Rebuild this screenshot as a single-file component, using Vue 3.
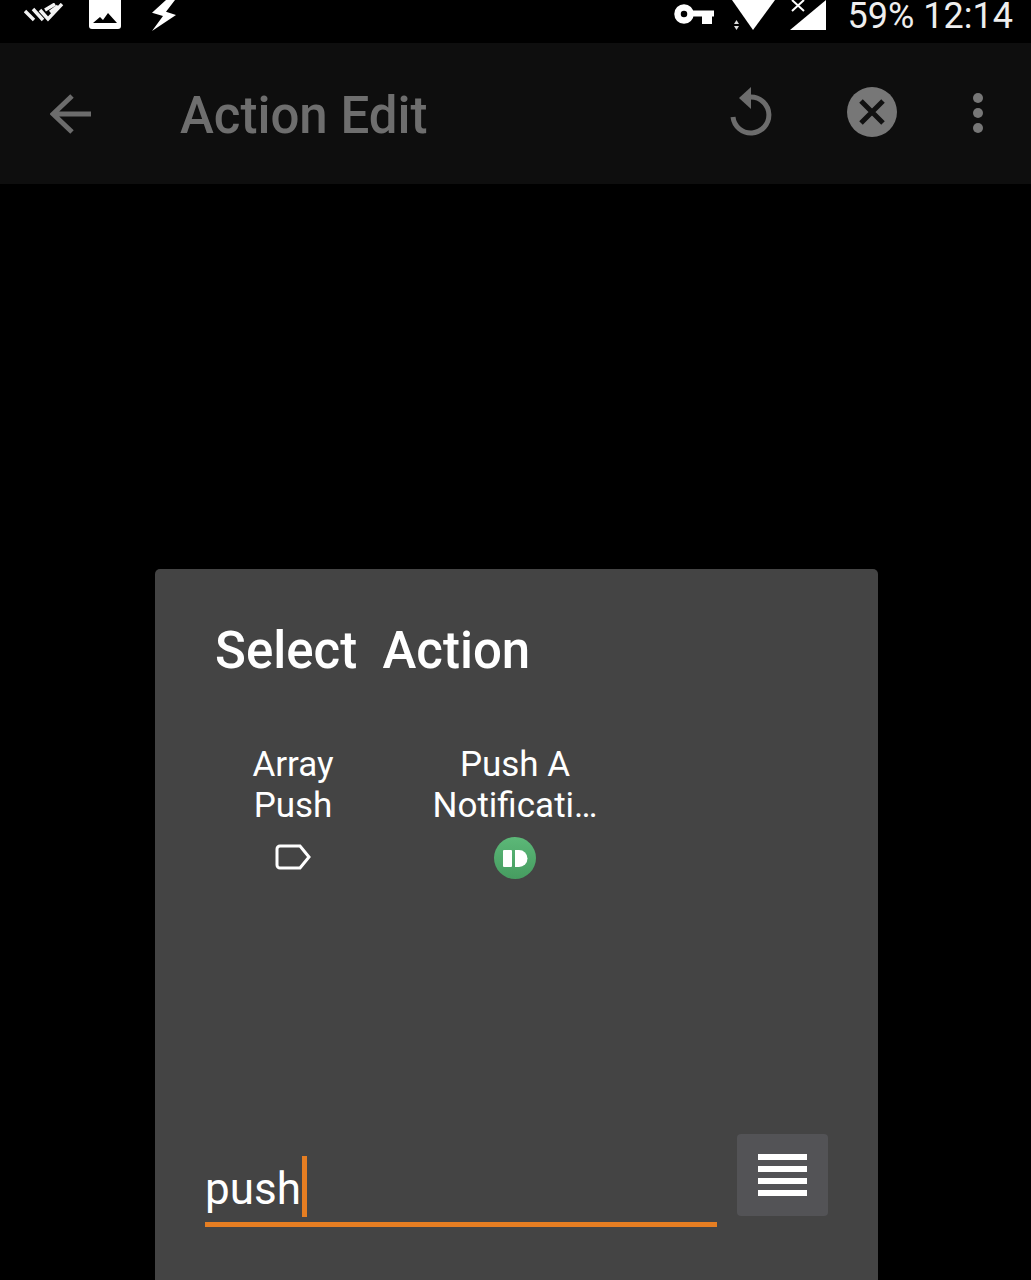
<template>
  <div class="screen">
    <div class="status">
      <div class="status-left">
        <svg class="ic" width="41" height="22" viewBox="0 0 41 22" fill="none" stroke="#f2f2f2" stroke-width="3.4">
          <path d="M1 8l9 9M9 6l10 11M16 7l8 9 14-15M21 7l10-6M26 9l8-6" />
        </svg>
        <svg class="ic" width="32" height="30" viewBox="0 0 32 30">
          <rect x="0" y="-8" width="32" height="37" rx="3" fill="#fff" />
          <path d="M4 23l7-6 3 3 5-7 9 10z" fill="#000" />
        </svg>
        <svg class="ic" width="26" height="32" viewBox="0 0 26 32">
          <path d="M15 0h9l-9 11.700L25 15 1 31l11-15L1 12.700z" fill="#fff" />
        </svg>
      </div>
      <div class="status-right">
        <svg class="ic" width="40" height="24" viewBox="0 0 40 24">
          <circle cx="10" cy="13" r="6.500" fill="none" stroke="#fff" stroke-width="6.500" />
          <path d="M17 9.500h23v6h-2v7.500H28v-7.500H17z" fill="#fff" />
        </svg>
        <svg class="ic wifi" width="43" height="31" viewBox="0 0 43 31">
          <path d="M0 0h43L21 30z" fill="#fff" />
          <path d="M2 24l2.500-4L7 24zM2 26l2.500 4L7 26z" fill="#ddd" />
        </svg>
        <svg class="ic signal" width="36" height="31" viewBox="0 0 36 31">
          <path d="M0 30L36 0v30z" fill="#fff" />
          <path d="M2 0l12 11M14 0L2 11" stroke="#fff" stroke-width="2" fill="none" />
        </svg>
        <span class="clock">59% 12:14</span>
      </div>
    </div>

    <header class="toolbar">
      <svg class="back" width="42" height="40" viewBox="0 0 42 40" fill="none" stroke="#6c6c6c" stroke-width="5">
        <path d="M41 20H4M22 2L3 20l19 18" />
      </svg>
      <h1 class="page-title">Action Edit</h1>
      <svg class="refresh" width="42" height="50" viewBox="0 0 42 50">
        <path d="M21 10a18 18 0 1 1-18 20" fill="none" stroke="#6c6c6c" stroke-width="5" />
        <path d="M21 0L9 11l12 11z" fill="#6c6c6c" />
      </svg>
      <svg class="close" width="50" height="50" viewBox="0 0 50 50">
        <circle cx="25" cy="25" r="25" fill="#777" />
        <path d="M14 14l22 22M36 14L14 36" stroke="#111" stroke-width="5" />
      </svg>
      <div class="dots"><i></i><i></i><i></i></div>
    </header>

    <main class="body">
      <section class="dialog">
        <h2 class="dialog-title">{{ dialogTitle }}</h2>
        <div class="actions">
          <div v-for="a in actions" :key="a.id" class="action">
            <div class="action-name">{{ a.line1 }}<br />{{ a.line2 }}</div>
            <svg v-if="a.id === 'tag'" class="tag-icon" width="36" height="26" viewBox="0 0 36 26">
              <path d="M5 2h20l9 11-9 11H5a3 3 0 0 1-3-3V5a3 3 0 0 1 3-3z" fill="none" stroke="#fff" stroke-width="3" />
            </svg>
            <svg v-else class="pb-icon" width="42" height="42" viewBox="0 0 42 42">
              <defs>
                <linearGradient id="pbFill" x1="0" y1="0" x2="0" y2="1">
                  <stop offset="0" stop-color="#5cb878" />
                  <stop offset="1" stop-color="#469c60" />
                </linearGradient>
              </defs>
              <circle cx="21" cy="21" r="21" fill="url(#pbFill)" />
              <rect x="9" y="13" width="9" height="17" rx="1" fill="#fff" />
              <path d="M21 13h4a8.500 8.500 0 0 1 0 17h-4z" fill="#fff" />
            </svg>
          </div>
        </div>
        <div class="search">
          <div class="field">
            <div class="field-text"><span>push</span><i class="caret"></i></div>
          </div>
          <button class="list-btn"><i></i><i></i><i></i><i></i></button>
        </div>
      </section>
    </main>
  </div>
</template>

<script setup>
// two spaces on purpose, the template compiler would squash them
const dialogTitle = 'Select  Action'

const actions = [
  { id: 'tag', line1: 'Array', line2: 'Push' },
  { id: 'pb', line1: 'Push A', line2: 'Notificati…' }
]
</script>

<style>
html, body { background: #000; }
</style>

<style scoped>
.screen {
  width: 1031px;
  height: 1280px;
  background: #000;
  overflow: hidden;
  display: flex;
  flex-direction: column;
  font-family: Roboto, "Liberation Sans", sans-serif;
  color: #fff;
}
.status {
  height: 43px;
  flex: none;
  display: flex;
  justify-content: space-between;
  padding: 0 18px 0 24px;
  box-sizing: border-box;
  overflow: hidden;
}
.status-left { display: flex; gap: 24px; align-items: flex-start; }
.status-left .ic:last-child { margin-left: 6px; }
.status-right { display: flex; align-items: flex-start; }
.ic { display: block; flex: none; }
.status-left .ic:first-child { margin-top: 3px; }
.status-right .ic:first-child { margin-top: 1px; }
.wifi { margin-left: 18px; }
.signal { margin-left: 15px; }
.clock {
  margin: 1px 0 0 22px;
  font-size: 36px;
  line-height: 30px;
  color: #eee;
  white-space: nowrap;
}
.toolbar {
  height: 141px;
  flex: none;
  background: #0e0e0e;
  display: flex;
  align-items: center;
  padding: 0 48px 0 50px;
  box-sizing: border-box;
}
.back { flex: none; }
.page-title {
  margin: 4px 0 0 88px;
  flex: 1;
  font-size: 51px;
  font-weight: 500;
  color: #6e6e6e;
}
.refresh { flex: none; margin-top: -3px; }
.close { flex: none; margin: -3px 0 0 75px; }
.dots {
  margin: -2px 0 0 76px;
  display: flex;
  flex-direction: column;
  gap: 5px;
}
.dots i { width: 10px; height: 10px; border-radius: 50%; background: #777; display: block; }
.body {
  flex: 1;
  padding: 385px 153px 0 155px;
  min-height: 0;
}
.dialog {
  height: 711px;
  background: #444;
  border-radius: 5px 5px 0 0;
  box-sizing: border-box;
  padding-top: 53px;
}
.dialog-title {
  margin: 0 0 0 60px;
  font-size: 51px;
  line-height: 58px;
  font-weight: 500;
  white-space: pre;
}
.actions {
  display: flex;
  margin: 64px 0 0 27px;
}
.action {
  width: 222px;
  display: flex;
  flex-direction: column;
  align-items: center;
}
.action-name {
  font-size: 35px;
  line-height: 41px;
  text-align: center;
  white-space: nowrap;
}
.tag-icon { display: block; margin-top: 18px; }
.pb-icon { display: block; margin-top: 11px; }
.search {
  display: flex;
  margin: 255px 0 0 50px;
  align-items: flex-start;
  gap: 20px;
}
.field {
  width: 512px;
  height: 93px;
  box-sizing: border-box;
  border-bottom: 5px solid #e67e22;
  padding-top: 22px;
}
.field-text {
  display: flex;
  height: 61px;
  font-size: 44px;
  line-height: 67px;
}
.caret { width: 5px; height: 61px; background: #e67e22; display: block; margin-left: 1px; }
.list-btn {
  width: 91px;
  height: 82px;
  border: 0;
  padding: 0;
  background: #535356;
  border-radius: 4px;
  display: flex;
  flex-direction: column;
  align-items: center;
  justify-content: center;
  gap: 6px;
}
.list-btn i { width: 49px; height: 6px; background: #fff; display: block; }
</style>
